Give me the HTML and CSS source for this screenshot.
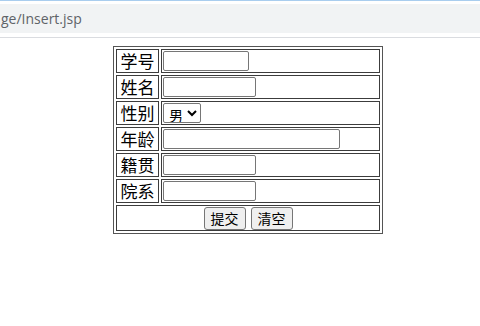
FILE: index.html
```html
<!DOCTYPE html>
<html lang="zh-CN">
<head>
    <meta charset="UTF-8">
    <title>添加学生</title>
    <link rel="stylesheet" href="styles.css">
</head>
<body>
    <div class="toolbar">
        <div class="address"><span class="url">ge/Insert.jsp</span></div>
    </div>

    <form action="Insert.jsp" method="post">
        <table class="student-form">
            <tr>
                <td class="label">学号</td>
                <td class="field"><input type="text" name="sno" class="in-short"></td>
            </tr>
            <tr>
                <td class="label">姓名</td>
                <td class="field"><input type="text" name="sname" class="in-mid"></td>
            </tr>
            <tr>
                <td class="label">性别</td>
                <td class="field">
                    <select name="ssex" class="sex">
                        <option>男</option>
                        <option>女</option>
                    </select>
                </td>
            </tr>
            <tr>
                <td class="label">年龄</td>
                <td class="field"><input type="text" name="sage" class="in-long"></td>
            </tr>
            <tr>
                <td class="label">籍贯</td>
                <td class="field"><input type="text" name="snative" class="in-mid"></td>
            </tr>
            <tr>
                <td class="label">院系</td>
                <td class="field"><input type="text" name="sdept" class="in-mid"></td>
            </tr>
            <tr>
                <td colspan="2" class="actions-cell">
                    <div class="actions">
                        <button type="submit">提交</button>
                        <button type="reset">清空</button>
                    </div>
                </td>
            </tr>
        </table>
    </form>
</body>
</html>
```

FILE: styles.css
```css
body {
    margin: 0;
    background-color: white;
    font-family: "Noto Sans CJK SC", sans-serif;
}
.toolbar {
    box-sizing: border-box;
    height: 38px;
    padding-top: 3px;
    border-top: 1px solid #a9cdee;
    border-bottom: 1px solid #dadce0;
}
.address {
    height: 29px;
    padding-left: 1px;
    background-color: #f1f3f4;
    display: flex;
    align-items: center;
}
.url {
    font-family: "Open Sans", "Noto Sans", sans-serif;
    font-size: 14px;
    color: #5f6368;
    white-space: nowrap;
}
.student-form {
    margin: 8px 0 0 113px;
    width: 270px;
    border: 1px solid #555;
    border-spacing: 2px;
}
.student-form td {
    border: 1px solid #3c3c3c;
    padding: 1px;
    height: 20px;
}
.label {
    width: 39px;
    text-align: center;
    font-size: 17px;
    line-height: 20px;
    color: #000;
}
.field input,
.sex {
    display: block;
    box-sizing: border-box;
    height: 20px;
    border: 1px solid #767676;
    border-radius: 2px;
    padding: 1px 2px;
    font-size: 13px;
}
.in-short {
    width: 86px;
}
.in-mid {
    width: 93px;
}
.in-long {
    width: 177px;
}
.field .sex {
    width: 38px;
    height: 20px;
    padding: 0 0 0 1px;
    font-family: "Noto Sans CJK SC", sans-serif;
    font-size: 14px;
    background-color: white;
    color: #000;
}
.student-form .actions-cell {
    padding: 1px 1px 0;
    height: auto;
}
.actions {
    display: flex;
    justify-content: center;
    gap: 5px;
}
.actions button {
    height: 23px;
    padding: 0 6px;
    font-family: "Noto Sans CJK SC", sans-serif;
    font-size: 14px;
    line-height: 19px;
    color: #000;
    background-color: #efefef;
    border: 1px solid #767676;
    border-radius: 3px;
}
```
